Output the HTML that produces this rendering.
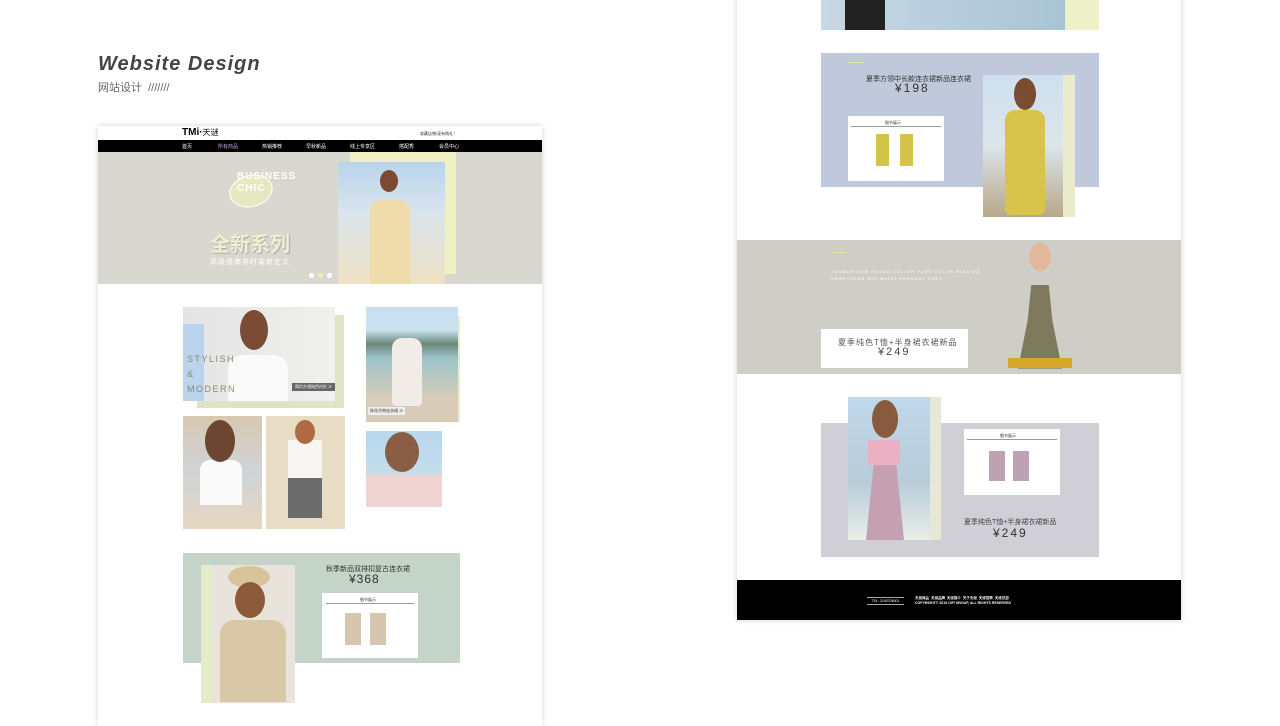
<!DOCTYPE html>
<html><head><meta charset="utf-8"><style>
*{margin:0;padding:0;box-sizing:border-box}
body{width:1280px;height:720px;overflow:hidden;background:#fff;position:relative;font-family:"Liberation Sans","Noto Sans CJK SC",sans-serif}
.a{position:absolute}
.panel{background:#fff;box-shadow:0 0 6px rgba(0,0,0,.18)}
.t{font-size:5px;color:#333;white-space:nowrap}
.w{color:#fff}
.card{background:#fff}
</style></head><body>
<div class="a" style="left:98px;top:53px;font-size:20px;font-style:italic;font-weight:bold;color:#444;letter-spacing:1px">Website Design</div>
<div class="a" style="left:98px;top:79px;font-size:11px;color:#666">网站设计 &nbsp;///////</div>

<!-- left page -->
<div class="a panel" style="left:98px;top:126px;width:444px;height:600px"></div>
<div class="a" style="left:182px;top:127px;font-size:10px;font-weight:900;letter-spacing:0px">TMi·<span style="font-weight:normal;font-size:8px">天谜</span></div>
<div class="a t" style="left:420px;top:131px;font-size:4px">收藏店铺/宠有购礼！</div>
<div class="a" style="left:98px;top:140px;width:444px;height:12px;background:#000"></div>
<div class="a t w" style="left:182px;top:143px">首页</div>
<div class="a t" style="left:218px;top:143px;color:#c9a3e6">所有商品</div>
<div class="a t w" style="left:262px;top:143px">热销推荐</div>
<div class="a t w" style="left:306px;top:143px">早秋新品</div>
<div class="a t w" style="left:350px;top:143px">线上专享区</div>
<div class="a t w" style="left:399px;top:143px">搭配秀</div>
<div class="a t w" style="left:439px;top:143px">会员中心</div>
<div class="a" style="left:98px;top:152px;width:444px;height:132px;background:#d8d8d0"></div>
<div class="a" style="left:229px;top:175px;width:44px;height:32px;border-radius:50%;background:#e6e9bf;border:1px solid #fff;transform:rotate(-15deg)"></div>
<div class="a" style="left:237px;top:171px;font-size:10px;color:#fff;font-weight:bold;line-height:12px;letter-spacing:1px">BUSINESS<br>CHIC</div>
<div class="a" style="left:210px;top:228px;font-size:20px;color:#eef0d0;font-weight:bold;text-shadow:1px 1px 1px #aaa">全新系列</div>
<div class="a" style="left:210px;top:257px;font-size:7px;color:#fff;letter-spacing:1px">高级感商务时装新定义</div>
<div class="a" style="left:309px;top:273px;width:5px;height:5px;border-radius:50%;background:#fff"></div>
<div class="a" style="left:318px;top:273px;width:5px;height:5px;border-radius:50%;background:#f0f0a0"></div>
<div class="a" style="left:327px;top:273px;width:5px;height:5px;border-radius:50%;background:#fff"></div>
<div class="a" style="left:350px;top:152px;width:106px;height:122px;background:#eef0c4"></div>
<div class="a" style="left:338px;top:162px;width:107px;height:122px;background:linear-gradient(#b8d4ec,#d8e4ec 40%,#efe2c4)"></div>
<div class="a" style="left:370px;top:200px;width:40px;height:84px;background:#f0dcaa;border-radius:12px 12px 0 0"></div>
<div class="a" style="left:380px;top:170px;width:18px;height:22px;background:#7a4a32;border-radius:50%"></div>

<div class="a" style="left:197px;top:315px;width:147px;height:93px;background:#dfe4c4"></div>
<div class="a" style="left:183px;top:307px;width:152px;height:94px;background:linear-gradient(90deg,#e4e4e4,#f0f0ee)"></div>
<div class="a" style="left:183px;top:324px;width:21px;height:77px;background:#b9d4ec"></div>
<div class="a" style="left:228px;top:355px;width:60px;height:46px;background:#fafafa;border-radius:14px 14px 0 0"></div>
<div class="a" style="left:240px;top:310px;width:28px;height:40px;background:#7a4c36;border-radius:50%"></div>
<div class="a" style="left:187px;top:352px;font-size:9px;color:#8a8a70;line-height:15px;letter-spacing:1.5px">STYLISH<br>&amp;<br>MODERN</div>
<div class="a t w" style="left:292px;top:383px;background:#666;padding:1px 3px;font-size:4px">简约方领纯色衬衫 ≫</div>

<div class="a" style="left:448px;top:316px;width:12px;height:106px;background:#e6eccc"></div>
<div class="a" style="left:366px;top:307px;width:92px;height:115px;background:linear-gradient(#c8e0f0 20%,#6a8a7a 32%,#9fc4cc 45%,#d8ccb8 80%)"></div>
<div class="a" style="left:392px;top:338px;width:30px;height:68px;background:#f2ece8;border-radius:10px 10px 4px 4px"></div>
<div class="a t" style="left:368px;top:407px;background:#eee;padding:1px 2px;font-size:4px">碎花吊带连衣裙 ≫</div>

<div class="a" style="left:183px;top:416px;width:79px;height:113px;background:linear-gradient(#d8c8b0,#cfd4d8 50%,#e8d6c0)"></div>
<div class="a" style="left:200px;top:460px;width:42px;height:45px;background:#fafafa;border-radius:10px 10px 0 0"></div>
<div class="a" style="left:205px;top:420px;width:30px;height:42px;background:#6e4432;border-radius:50%"></div>
<div class="a" style="left:266px;top:416px;width:79px;height:113px;background:#e8dcc4"></div>
<div class="a" style="left:288px;top:440px;width:34px;height:38px;background:#f8f6f2"></div>
<div class="a" style="left:288px;top:478px;width:34px;height:40px;background:#6c6c6c"></div>
<div class="a" style="left:295px;top:420px;width:20px;height:24px;background:#b06a42;border-radius:50%"></div>
<div class="a" style="left:366px;top:431px;width:76px;height:76px;background:linear-gradient(#b8d8ee,#c4dcea 55%,#f0d4d4 60%)"></div>
<div class="a" style="left:385px;top:432px;width:34px;height:40px;background:#8a5e44;border-radius:50%"></div>

<div class="a" style="left:183px;top:553px;width:277px;height:110px;background:#c4d4c8"></div>
<div class="a" style="left:201px;top:565px;width:94px;height:138px;background:linear-gradient(90deg,#e4ecc8 12%,#e8e4dc 12%)"></div>
<div class="a" style="left:220px;top:620px;width:66px;height:82px;background:#d8c8a8;border-radius:14px 14px 0 0"></div>
<div class="a" style="left:228px;top:566px;width:42px;height:22px;background:#d8c49a;border-radius:50%"></div>
<div class="a" style="left:235px;top:582px;width:30px;height:36px;background:#8a5a3a;border-radius:50%"></div>
<div class="a" style="left:326px;top:564px;font-size:7px;color:#333">秋季新品双排扣复古连衣裙</div>
<div class="a" style="left:349px;top:572px;font-size:12px;color:#333;letter-spacing:1px">¥368</div>
<div class="a card" style="left:322px;top:593px;width:96px;height:65px"></div>
<div class="a t" style="left:360px;top:597px;font-size:4px">细节展示</div>
<div class="a" style="left:326px;top:603px;width:88px;height:1px;background:#999"></div>
<div class="a" style="left:345px;top:613px;width:16px;height:32px;background:#d6c6b0"></div>
<div class="a" style="left:370px;top:613px;width:16px;height:32px;background:#d6c6b0"></div>

<!-- right page -->
<div class="a panel" style="left:737px;top:-10px;width:444px;height:630px"></div>
<div class="a" style="left:821px;top:0;width:244px;height:30px;background:linear-gradient(90deg,#c8d8e4,#a8c4d4)"></div>
<div class="a" style="left:845px;top:0;width:40px;height:30px;background:#222"></div>
<div class="a" style="left:1065px;top:0;width:34px;height:30px;background:#eef0c8"></div>

<div class="a" style="left:821px;top:53px;width:278px;height:134px;background:#c0c8dc"></div>
<div class="a" style="left:848px;top:62px;width:16px;height:1px;background:#e8e4a0"></div>
<div class="a" style="left:866px;top:74px;font-size:7px;color:#333">夏季方领中长款连衣裙新品连衣裙</div>
<div class="a" style="left:895px;top:81px;font-size:12px;color:#333;letter-spacing:2px">¥198</div>
<div class="a card" style="left:848px;top:116px;width:96px;height:65px"></div>
<div class="a t" style="left:885px;top:120px;font-size:4px">细节展示</div>
<div class="a" style="left:851px;top:126px;width:90px;height:1px;background:#999"></div>
<div class="a" style="left:876px;top:134px;width:13px;height:32px;background:#d4c44a"></div>
<div class="a" style="left:900px;top:134px;width:13px;height:32px;background:#d4c44a"></div>
<div class="a" style="left:983px;top:75px;width:92px;height:142px;background:linear-gradient(#cfe0ee,#dce4ec 50%,#b8a888)"></div>
<div class="a" style="left:1063px;top:75px;width:12px;height:142px;background:#eaeccc"></div>
<div class="a" style="left:1005px;top:110px;width:40px;height:105px;background:#d8c44a;border-radius:10px 10px 6px 6px"></div>
<div class="a" style="left:1014px;top:78px;width:22px;height:32px;background:#7a4c30;border-radius:50%"></div>

<div class="a" style="left:737px;top:240px;width:444px;height:134px;background:#cecdc6"></div>
<div class="a" style="left:831px;top:252px;width:16px;height:1px;background:#e8e4a0"></div>
<div class="a" style="left:831px;top:268px;font-size:4px;color:#fff;letter-spacing:1px;line-height:7px">SUMMER NEW ROUND COLLAR PURE COLOR PLEATED<br>SWEETNESS MID-WAIST PENDANT DRES</div>
<div class="a card" style="left:821px;top:329px;width:147px;height:39px"></div>
<div class="a" style="left:838px;top:337px;font-size:8px;color:#555;letter-spacing:1px">夏季纯色T恤+半身裙衣裙新品</div>
<div class="a" style="left:878px;top:346px;font-size:11px;color:#444;letter-spacing:2px">¥249</div>
<div class="a" style="left:1018px;top:285px;width:44px;height:88px;background:#7e7a5e;clip-path:polygon(30% 0,70% 0,78% 40%,100% 95%,0 95%,22% 40%)"></div>
<div class="a" style="left:1008px;top:358px;width:64px;height:10px;background:#d8a82a"></div>
<div class="a" style="left:1029px;top:243px;width:22px;height:28px;background:#e4b89a;border-radius:50%"></div>

<div class="a" style="left:821px;top:423px;width:278px;height:134px;background:#d0cfd6"></div>
<div class="a" style="left:848px;top:397px;width:93px;height:143px;background:linear-gradient(#c0d8ec,#b8ccd8 60%,#e8eee8)"></div>
<div class="a" style="left:930px;top:397px;width:11px;height:143px;background:#e6e8d4"></div>
<div class="a" style="left:868px;top:440px;width:32px;height:25px;background:#ecb0c4"></div>
<div class="a" style="left:866px;top:465px;width:38px;height:75px;background:#c4a0b0;clip-path:polygon(20% 0,80% 0,100% 100%,0 100%)"></div>
<div class="a" style="left:872px;top:400px;width:26px;height:38px;background:#8a5a3e;border-radius:50%"></div>
<div class="a card" style="left:964px;top:429px;width:96px;height:66px"></div>
<div class="a t" style="left:1000px;top:433px;font-size:4px">细节展示</div>
<div class="a" style="left:967px;top:439px;width:90px;height:1px;background:#999"></div>
<div class="a" style="left:989px;top:451px;width:16px;height:30px;background:#bea2b4"></div>
<div class="a" style="left:1013px;top:451px;width:16px;height:30px;background:#bea2b4"></div>
<div class="a" style="left:964px;top:517px;font-size:7px;color:#444">夏季纯色T恤+半身裙衣裙新品</div>
<div class="a" style="left:993px;top:526px;font-size:12px;color:#333;letter-spacing:2px">¥249</div>

<div class="a" style="left:737px;top:580px;width:444px;height:40px;background:#000"></div>
<div class="a" style="left:867px;top:597px;width:37px;height:8px;border-top:1px solid #aaa;border-bottom:1px solid #aaa;font-size:3.5px;color:#fff;text-align:center;line-height:6px">TEL: 2163706001</div>
<div class="a" style="left:915px;top:596px;font-size:3.5px;color:#fff;line-height:5px;font-weight:bold">天谜商品 &nbsp;天谜品牌 &nbsp;天谜简介 &nbsp;关于天谜 &nbsp;天谜招聘 &nbsp;天谜总部<br>COPYRIGHT© 2019 CIFI GROUP, ALL RIGHTS RESERVED</div>
</body></html>
